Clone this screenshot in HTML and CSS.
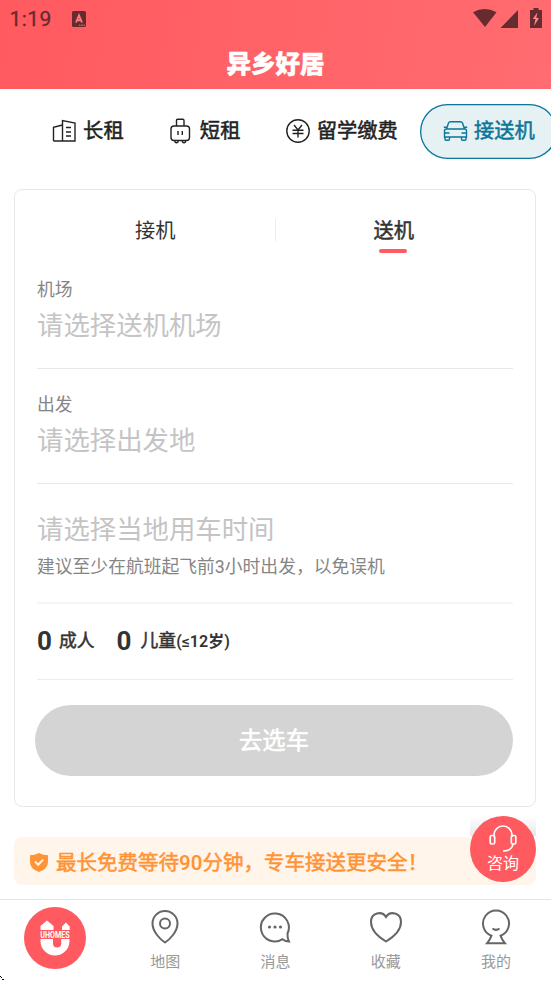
FILE: index.html
```html
<!DOCTYPE html>
<html lang="zh-CN">
<head>
<meta charset="utf-8">
<meta name="viewport" content="width=device-width, initial-scale=1">
<title>异乡好居</title>
<link rel="stylesheet" href="styles.css">
</head>
<body>
<header class="header">
  <div class="status">
    <span class="clock">1:19</span>
    <svg class="status-app" width="14" height="16" viewBox="0 0 14 16"><rect width="14" height="16" rx="1.5" fill="#652b2f"/><path d="M4 11.500 7 4.500l3 7M5.200 9.300h3.600" fill="none" stroke="#ff7a7e" stroke-width="1.900"/><path d="M7 14.200h6" stroke="#ff7a7e" stroke-width="1" stroke-dasharray="1.4 .8"/></svg>
    <svg class="status-right" width="70" height="22" viewBox="0 0 70 22" fill="#652b2f"><path d="M0 4.200Q11.500-2.400 23.500 4.200L12 19Z"/><path d="M45 2v18H27.500Z"/><path d="M57 2h3.500V0h5v2H69v18H57Z"/><path d="m64.300 4.500-4.500 6.500h2.700L61 18l5-8h-2.700Z" fill="#ff8a8d"/></svg>
  </div>
  <h1 class="brand">异乡好居</h1>
</header>

<nav class="services">
  <a class="service"><svg class="service-icon" viewBox="0 0 24 24"><path d="M1.500 22V8.200L10.500 6v16M10.500 22V1.500L23 4v18ZM1.500 22h9M14 8.500h5M14 13h5M14 17h5"/></svg>长租</a>
  <a class="service"><svg class="service-icon" viewBox="0 0 24 24"><rect x="2" y="7" width="18.500" height="14.500" rx="3"/><path d="M7.500 7V1.500Q7.500 .3 8.700 .3h5.100Q15 .3 15 1.500V7M9 12v4M13.300 12v4M6 21.500V23q1.500 1.500 3 0v-1.500M13.500 21.500V23q1.500 1.500 3 0v-1.500"/></svg>短租</a>
  <a class="service"><svg class="service-icon" viewBox="0 0 24 24"><circle cx="12" cy="12" r="11.200"/><path d="m8 6 4 5 4-5M6.500 11.300h11M6.500 14.500h11M12 11v7.500"/></svg>留学缴费</a>
  <a class="service service-active"><svg class="service-icon" viewBox="0 0 24 24"><path d="M3.500 10 5.500 4Q6 2.800 7.500 2.800h10q1.500 0 2 1.200l2 6M.8 8.200h3.200M21 8.200h3.200M3 10h19q1.500 0 1.500 2v6h-22v-6q0-2 1.500-2ZM2 18v2.200q0 1 1 1h2.500q1 0 1-1V18M18.500 18v2.200q0 1 1 1H22q1 0 1-1V18M2 14h4.500M18.500 14H23"/></svg>接送机</a>
</nav>

<main class="card">
  <div class="tabs">
    <div class="tab">接机</div>
    <div class="tab tab-active">送机</div>
  </div>
  <section class="field"><div class="label">机场</div><div class="value">请选择送机机场</div></section>
  <section class="field"><div class="label">出发</div><div class="value">请选择出发地</div></section>
  <section class="field field-time"><div class="value">请选择当地用车时间</div><div class="label hint">建议至少在航班起飞前3小时出发，以免误机</div></section>
  <section class="people">
    <span class="count">0</span><span class="kind">成人</span>
    <span class="count count-child">0</span><span class="kind">儿童<b class="age">(≤12岁)</b></span>
  </section>
  <button class="submit">去选车</button>
</main>

<aside class="promise">
  <svg class="shield" width="18" height="19" viewBox="0 0 18 19"><path d="M9 0q4 2.300 9 2.300V9q0 7-9 10Q0 16 0 9V2.300Q5 2.300 9 0Z" fill="#ff9335"/><path d="m5 8.500 3.200 3.200L13.200 6.500" fill="none" stroke="#fff5ea" stroke-width="2"/></svg>
  <span class="promise-text">最长免费等待<b class="minutes">90</b>分钟，专车接送更安全！</span>
  <div class="chat">
    <div class="chat-button">
      <svg width="28" height="28" viewBox="0 0 28 28" fill="none" stroke="#fff" stroke-width="1.700"><path d="M5 12V10a9 9 0 0 1 18 0v2M24 19q-1 7-10 7"/><rect x="1.200" y="10.500" width="4.500" height="8.500" rx="1.500"/><rect x="22.300" y="10.500" width="4.500" height="8.500" rx="1.500"/></svg>
      <span>咨询</span>
    </div>
  </div>
</aside>

<footer class="tabbar">
  <a class="bar-item bar-home"><span class="home-logo">
    <svg width="40" height="36" viewBox="-5 0 40 36" fill="#fff"><path d="M.5 10V6L7 .5 13.500 6v4ZM22 10V6.500l4-4 3.700 4V10Z"/><path d="M.5 19H13v4.500a4.100 4.100 0 0 0 8.200 0V19H29.500v2a14.500 14.500 0 0 1-29 0Z"/><text x=".3" y="17.800" textLength="29.400" lengthAdjust="spacingAndGlyphs">UHOMES</text></svg>
  </span></a>
  <a class="bar-item"><svg class="bar-icon" viewBox="0 0 36 36"><path d="M18 33.500C14 31 5.500 23 5.500 14.500a12.500 12.500 0 0 1 25 0C30.500 23 22 31 18 33.500Z"/><circle cx="18" cy="14.500" r="5"/></svg>地图</a>
  <a class="bar-item"><svg class="bar-icon" viewBox="0 0 36 36"><path d="M30.500 24.500A14 14 0 1 0 25.500 30.200Q28.500 32.500 32 32.500 30.300 29.500 30.500 24.500Z"/><g class="dots"><circle cx="12.500" cy="18" r="1.600"/><circle cx="18" cy="18" r="1.600"/><circle cx="23.500" cy="18" r="1.600"/></g></svg>消息</a>
  <a class="bar-item"><svg class="bar-icon" viewBox="0 0 36 36"><path d="M18 32.500C13 29.500 3 22.500 3 13 3 3.500 14 1.500 18 8 22 1.500 33 3.500 33 13 33 22.500 23 29.500 18 32.500Z"/></svg>收藏</a>
  <a class="bar-item"><svg class="bar-icon" viewBox="0 0 36 36"><path d="M13.500 26.700a13 13 0 1 1 9 0Q24 31 27 34.300H9Q12 31 13.500 26.700ZM14.500 19.500q3.500 2.800 7 0"/></svg>我的</a>
  <svg class="pointer" width="4" height="5" viewBox="0 0 4 5"><path d="M0 0h1v1H0ZM1 1h1v1H1ZM2 3h2v1H2Z"/></svg>
</footer>
</body>
</html>
```

FILE: styles.css
```css
* { box-sizing: border-box; }
body {
  margin: 0;
  width: 551px;
  height: 981px;
  overflow: hidden;
  background: #fff;
  color: #333;
  font-family: Roboto, "Noto Sans CJK SC", sans-serif;
}
svg { display: block; flex: none; }

.header {
  height: 89px;
  background: linear-gradient(100deg, #ff5a5f, #ff6c71);
}
.status {
  display: flex;
  align-items: flex-start;
  height: 45px;
  padding: 8px 10px 0 9.500px;
  color: #652b2f;
}
.clock { width: 62.500px; font-size: 21px; line-height: 23px; letter-spacing: .4px; -webkit-text-stroke: .3px currentColor; }
.status-app { margin-top: 3px; }
.status-right { margin-left: auto; margin-right: -1.500px; }
.brand {
  margin: 0;
  text-align: center;
  font-family: "Noto Sans CJK SC", sans-serif;
  font-size: 24.500px;
  font-weight: 900;
  line-height: 35px;
  color: #fff;
  -webkit-text-stroke: .5px #fff;
}

.services {
  display: flex;
  width: 551px;
  overflow: hidden;
  padding: 15px 0 30px 29.500px;
}
.service {
  display: flex;
  flex: none;
  align-items: center;
  gap: 7px;
  height: 55px;
  padding: 0 22.600px 1px;
  color: #222;
  font-size: 20.300px;
  line-height: 30px;
  -webkit-text-stroke: .5px currentColor;
}
.service-icon {
  width: 24px;
  height: 24px;
  fill: none;
  stroke: currentColor;
  stroke-width: 1.400;
  overflow: visible;
}
.service-active {
  color: #0b7699;
  background: #e6f1f4;
  border-radius: 28px;
  box-shadow: inset 0 0 0 1.300px #0b7699;
}

.card {
  width: 522px;
  height: 618px;
  margin-left: 14px;
  padding: 0 22px;
  border: 1px solid #e8e8e8;
  border-radius: 8px;
}
.tabs { display: flex; height: 64px; }
.tab {
  position: relative;
  flex: 1;
  padding: 26px 2px 0 0;
  text-align: center;
  font-size: 20.300px;
  line-height: 30px;
}
.tab-active { padding-right: 1px; -webkit-text-stroke: .5px currentColor; }
.tab-active::before {
  content: "";
  position: absolute;
  left: -1px;
  top: 29px;
  width: 1px;
  height: 22px;
  background: #ececec;
}
.tab-active::after {
  content: "";
  position: absolute;
  left: calc(50% - 15px);
  top: 59px;
  width: 28px;
  height: 4px;
  border-radius: 2px;
  background: #ff5a5f;
}
.field { height: 115px; padding-top: 24px; border-bottom: 1px solid #e8e8e8; }
.label { font-size: 17.800px; line-height: 24px; color: #858585; }
.value { margin-top: 6px; font-size: 26.400px; line-height: 36px; color: #c4c4c4; }
.field-time { height: 120px; padding-top: 28px; border-bottom: 2px solid #f5f5f5; }
.field-time .value { margin-top: 0; }
.hint { margin-top: 7px; }
.people {
  display: flex;
  height: 76px;
  padding-top: 18px;
  border-bottom: 1px solid #ececec;
  line-height: 38px;
}
.count { font-size: 26px; font-weight: 700; width: 22px; }
.count-child { margin-left: 22px; width: 24px; }
.kind { font-size: 17.800px; -webkit-text-stroke: .5px currentColor; }
.age { font-size: 16px; font-weight: 600; -webkit-text-stroke: 0; }
.submit {
  display: block;
  width: 478px;
  height: 71px;
  margin: 25px 0 0 -2px;
  padding: 0;
  border: 0;
  border-radius: 36px;
  background: #d4d4d4;
  color: #fff;
  font: 23.300px/70px Roboto, "Noto Sans CJK SC", sans-serif;
  -webkit-text-stroke: .6px #fff;
}

.promise {
  position: relative;
  display: flex;
  align-items: center;
  gap: 8px;
  width: 522px;
  height: 48px;
  margin: 30px 0 14px 14px;
  padding: 2px 0 0 16px;
  border-radius: 8px;
  background: #fff5ea;
  color: #ff9335;
  font-size: 20.500px;
  line-height: 30px;
  white-space: nowrap;
  -webkit-text-stroke: .5px currentColor;
}
.promise-text { padding-top: 2px; }
.minutes { font-weight: 600; -webkit-text-stroke: 0; }
.chat {
  position: absolute;
  right: 0;
  top: -21px;
  width: 66px;
  height: 66px;
  background: linear-gradient(#fff, #e8e8e8 20px, transparent 20px);
}
.chat-button {
  display: flex;
  flex-direction: column;
  align-items: center;
  height: 66px;
  padding-top: 9px;
  border-radius: 50%;
  background: #ff5a5f;
  color: #fff;
  font-size: 16px;
  line-height: 22px;
  -webkit-text-stroke: 0;
}

.tabbar {
  position: relative;
  display: grid;
  grid-template-columns: repeat(5, 1fr);
  height: 82px;
  border-top: 1px solid #e5e5e5;
}
.bar-item {
  display: flex;
  flex-direction: column;
  align-items: center;
  padding-top: 9px;
  font-size: 15px;
  line-height: 20px;
  color: #999;
}
.bar-icon {
  width: 36px;
  height: 36px;
  margin-bottom: 7px;
  fill: none;
  stroke: #666;
  stroke-width: 2;
}
.dots { fill: #666; stroke: none; }
.bar-home { padding-top: 7px; }
.home-logo {
  display: grid;
  place-items: center;
  width: 62px;
  height: 62px;
  border-radius: 50%;
  background: #ff5a5f;
}
.home-logo text { font: 700 9.500px Roboto, sans-serif; }
.pointer { position: absolute; left: 0; bottom: 0; }
```
